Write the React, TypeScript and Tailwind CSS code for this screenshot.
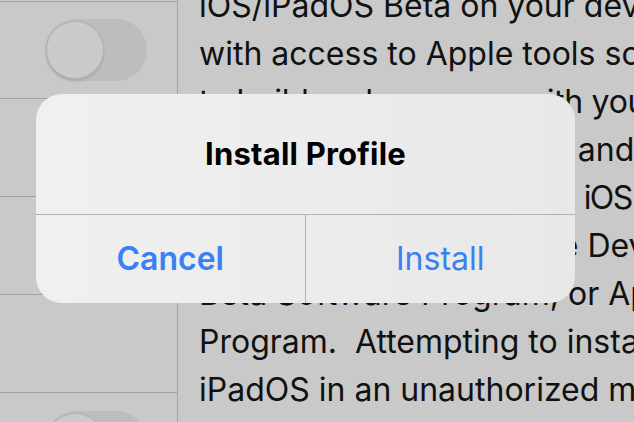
import React from 'react';

const bodyLines = [
  { text: 'iOS/iPadOS Beta on your device', cls: '' },
  { text: 'with access to Apple tools so you can', cls: '' },
  { text: 'to build and run apps with your', cls: 'tracking-[-0.3px]' },
  { text: 'current software release and', cls: '' },
  { text: 'upcoming beta versions on  iOS', cls: 'tracking-[-1.6px]' },
  { text: 'is a member of the Apple Developer', cls: '' },
  { text: 'Beta Software Program, or AppleSeed', cls: '' },
  { text: 'Program.  Attempting to install iOS or', cls: '' },
  { text: 'iPadOS in an unauthorized manner', cls: '' },
];

const Toggle: React.FC = () => (
  <div className="relative h-[62px] w-[102px] rounded-full bg-[#bdbdbd]">
    <div className="absolute left-[1px] top-[2px] h-[58px] w-[58px] rounded-full border border-[#b3b3b3] bg-[#cacaca] shadow-[0_2px_3px_rgba(0,0,0,0.12)]" />
  </div>
);

const App: React.FC = () => {
  return (
    <div className="relative h-[422px] w-[634px] overflow-hidden bg-[#c9c9c9] font-['Inter',sans-serif] text-black">
      <div className="flex h-full">
        {/* settings list on the left */}
        <div className="w-[178px] shrink-0 border-r border-[#a3a3a3] pt-px">
          <div className="h-[97px] border-t border-[#a3a3a3] pl-[45px] pt-[17px]">
            <Toggle />
          </div>
          <div className="h-[98px] border-t border-[#a3a3a3]" />
          <div className="h-[98px] border-t border-[#a3a3a3]" />
          <div className="h-[98px] border-t border-[#a3a3a3]" />
          <div className="h-[98px] border-t border-[#a3a3a3] pl-[45px] pt-[18px]">
            <Toggle />
          </div>
        </div>

        {/* consent text */}
        <div className="min-w-0 flex-1 pl-[21px]">
          <div className="-mt-[18px] whitespace-pre text-[32px] leading-[48px] text-[#111]">
            {bodyLines.map((line) => (
              <p key={line.text} className={line.cls}>
                {line.text}
              </p>
            ))}
          </div>
        </div>
      </div>

      {/* alert */}
      <div className="absolute left-[36px] top-[94px] flex h-[209px] w-[539px] flex-col overflow-hidden rounded-[26px] bg-linear-to-r from-[#f0f0f0] to-[#e8e8e8]">
        <div className="flex h-[120px] items-center justify-center text-[31px] font-bold tracking-[0.2px]">
          Install Profile
        </div>
        <div className="grid flex-1 grid-cols-2 border-t border-[#b3b3b3] text-[32px] text-[#3a80f5]">
          <button className="flex items-center justify-center border-r border-[#b3b3b3] font-semibold">
            Cancel
          </button>
          <button className="flex items-center justify-center">Install</button>
        </div>
      </div>
    </div>
  );
};

export default App;
